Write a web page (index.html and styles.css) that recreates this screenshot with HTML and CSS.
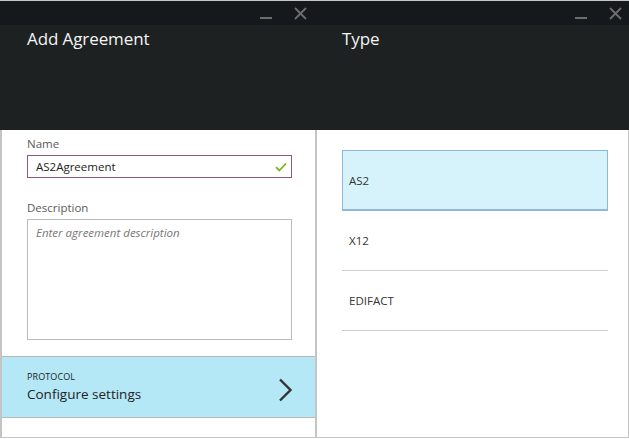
FILE: index.html
```html
<!DOCTYPE html>
<html>
<head>
<meta charset="utf-8">
<link rel="stylesheet" href="styles.css">
</head>
<body>
<div class="window">
  <section class="blade blade-left">
    <header class="blade-head">
      <div class="controls">
        <span class="ctl-min"></span>
        <svg class="ctl-close" width="13" height="13" viewBox="0 0 13 13"><path d="M1 1L12 12M12 1L1 12" stroke="#6b6d6e" stroke-width="1.8" fill="none"/></svg>
      </div>
      <h1 class="blade-title">Add Agreement</h1>
    </header>
    <div class="blade-body body-left">
      <div class="form">
        <label class="field-label">Name</label>
        <div class="input input-valid">
          <span class="input-text">AS2Agreement</span>
          <svg class="check" width="12" height="10" viewBox="0 0 12 10"><path d="M1 5.2L4.3 8.5L11 1.5" stroke="#7ab51d" stroke-width="1.8" fill="none"/></svg>
        </div>
        <label class="field-label label-desc">Description</label>
        <div class="textarea"><span class="placeholder">Enter agreement description</span></div>
      </div>
      <div class="protocol">
        <div class="protocol-text">
          <div class="protocol-kicker">PROTOCOL</div>
          <div class="protocol-value">Configure settings</div>
        </div>
        <svg class="chevron" width="15" height="24" viewBox="0 0 15 24"><path d="M2 1.5L12.5 12L2 22.5" stroke="#333" stroke-width="2.4" fill="none"/></svg>
      </div>
    </div>
  </section>
  <section class="blade blade-right">
    <header class="blade-head">
      <div class="controls">
        <span class="ctl-min"></span>
        <svg class="ctl-close" width="13" height="13" viewBox="0 0 13 13"><path d="M1 1L12 12M12 1L1 12" stroke="#6b6d6e" stroke-width="1.8" fill="none"/></svg>
      </div>
      <h1 class="blade-title">Type</h1>
    </header>
    <div class="blade-body body-right">
      <ul class="type-list">
        <li class="type-item selected">AS2</li>
        <li class="type-item">X12</li>
        <li class="type-item">EDIFACT</li>
      </ul>
    </div>
  </section>
</div>
</body>
</html>
```
FILE: styles.css
```css
html, body {
  margin: 0;
  padding: 0;
  background: #ffffff;
}
body {
  font-family: "Open Sans", "Noto Sans", sans-serif;
  width: 629px;
  height: 439px;
  overflow: hidden;
}
.window {
  display: flex;
  width: 629px;
  height: 439px;
  border-top: 1px solid #c8c8c8;
  box-sizing: border-box;
}
.blade {
  display: flex;
  flex-direction: column;
}
.blade-left {
  width: 317px;
}
.blade-right {
  width: 312px;
}
.blade-head {
  height: 129px;
  background: #1d2122;
  flex: none;
}
.controls {
  height: 24px;
  background: #16191b;
  display: flex;
  justify-content: flex-end;
  align-items: flex-start;
  padding-right: 10px;
  gap: 22px;
}
.blade-left .controls {
  padding-right: 10px;
}
.blade-right .controls {
  padding-right: 7px;
}
.ctl-min {
  width: 12px;
  height: 2px;
  background: #6b6d6e;
  margin-top: 16px;
}
.ctl-close {
  margin-top: 6px;
}
.blade-title {
  margin: 0;
  padding: 0 0 0 27px;
  font-weight: 400;
  font-size: 17px;
  line-height: 28px;
  color: #f4f4f4;
  letter-spacing: -0.1px;
}
.blade-right .blade-title {
  padding-left: 25px;
}
.blade-body {
  flex: 1;
  box-sizing: border-box;
  border-bottom: 1px solid #c4c4c4;
  margin-bottom: 1px;
}
.body-left {
  border-left: 2px solid #c4c4c4;
  border-right: 2px solid #c4c4c4;
  display: flex;
  flex-direction: column;
}
.body-right {
  border-right: 1px solid #c4c4c4;
}
.form {
  padding: 6px 23px 16px 25px;
  display: flex;
  flex-direction: column;
}
.field-label {
  font-size: 11.5px;
  line-height: 16px;
  color: #5a5a5a;
  margin-bottom: 3px;
}
.label-desc {
  margin-top: 22px;
}
.input {
  height: 23px;
  box-sizing: border-box;
  border: 1px solid #8a5a7c;
  display: flex;
  align-items: center;
  justify-content: space-between;
  padding: 0 4px 0 8px;
}
.input-text {
  font-size: 11.5px;
  color: #222;
}
.check {
  margin-top: 1px;
}
.textarea {
  height: 121px;
  box-sizing: border-box;
  border: 1px solid #bcbcbc;
  padding: 0 8px;
  line-height: 22px;
}
.placeholder {
  font-size: 11.5px;
  font-style: italic;
  color: #777;
}
.protocol {
  height: 62px;
  box-sizing: border-box;
  border-top: 1px solid #b9b9b9;
  border-bottom: 1px solid #b9b9b9;
  background: #b5e8f7;
  display: flex;
  justify-content: space-between;
  align-items: flex-start;
  padding: 14px 22px 0 25px;
}
.protocol-kicker {
  font-size: 9px;
  line-height: 12px;
  color: #222;
  letter-spacing: 0.1px;
}
.protocol-value {
  font-size: 13.5px;
  line-height: 18px;
  margin-top: 2px;
  color: #222;
}
.chevron {
  margin-top: 7px;
}
.type-list {
  list-style: none;
  margin: 0;
  padding: 20px 20px 0 25px;
}
.type-item {
  height: 60px;
  box-sizing: border-box;
  border-bottom: 1px solid #cfcfcf;
  display: flex;
  align-items: center;
  padding-left: 7px;
  font-size: 11.5px;
  color: #333;
}
.type-item.selected {
  background: #d6f3fc;
  border: 1px solid #8db7dc;
  border-bottom: 2px solid #8db7dc;
  padding-left: 6px;
  height: 61px;
}
```
